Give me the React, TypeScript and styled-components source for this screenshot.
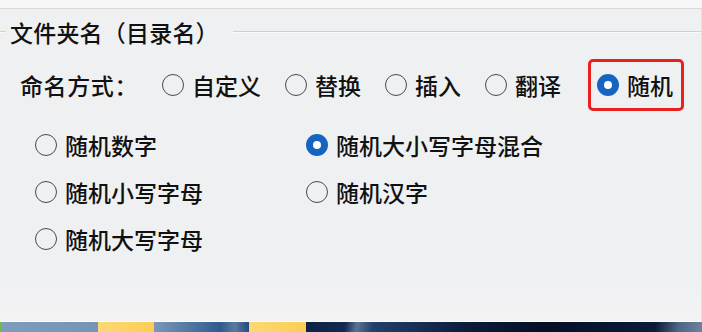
import styled, { createGlobalStyle } from "styled-components";

const GlobalStyle = createGlobalStyle`
  body {
    margin: 0;
    background: #eff0f2;
    font-family: "Noto Sans CJK SC", "Microsoft YaHei", sans-serif;
    font-weight: 500;
    color: #111;
  }
`;

const modes = ["自定义", "替换", "插入", "翻译"];
const options = [
  { label: "随机数字", checked: false },
  { label: "随机大小写字母混合", checked: true },
  { label: "随机小写字母", checked: false },
  { label: "随机汉字", checked: false },
  { label: "随机大写字母", checked: false },
];

const Radio = ({ label, checked }: { label: string; checked?: boolean }) => (
  <RadioItem>
    <Circle $checked={checked} />
    <span>{label}</span>
  </RadioItem>
);

const App = () => {
  return (
    <Page>
      <GlobalStyle />
      <TopBand />
      <Panel>
        <Legend>
          <LegendLine $short />
          <LegendText>文件夹名（目录名）</LegendText>
          <LegendLine />
        </Legend>
        <ModeRow>
          <ModeLabel>命名方式：</ModeLabel>
          {modes.map((m) => (
            <Radio key={m} label={m} />
          ))}
          <Highlight>
            <Radio label="随机" checked />
          </Highlight>
        </ModeRow>
        <OptionGrid>
          {options.map((o) => (
            <Radio key={o.label} label={o.label} checked={o.checked} />
          ))}
        </OptionGrid>
      </Panel>
      <Strip>
        <Seg $w={2} $bg="#6cc04a" />
        <Seg $w={96} $bg="linear-gradient(90deg, #7e9cbd, #7594b7)" />
        <Seg $w={56} $bg="linear-gradient(90deg, #fcd976, #fbcd52)" />
        <Seg $w={95} $bg="linear-gradient(90deg, #7c97b8, #2f5a8f 70%, #5a7aa0 85%, #254a7c)" />
        <Seg $w={57} $bg="linear-gradient(90deg, #fcd976, #fbcd52)" />
        <Seg
          $w={396}
          $bg="linear-gradient(100deg, #0d2244 0%, #112a52 10%, #5a7394 13%, #22406b 17%, #0b1d3c 40%, #040f26 60%, #0a1c3a 88%, #4f6684 94%, #6d829d 100%)"
        />
      </Strip>
    </Page>
  );
};

const Page = styled.div`
  width: 702px;
  height: 332px;
  display: flex;
  flex-direction: column;
  overflow: hidden;
`;

const TopBand = styled.div`
  height: 8px;
  background: #f7f7f8;
  border-bottom: 1px solid #d9d9db;
`;

const Panel = styled.div`
  flex: 1;
  display: flex;
  flex-direction: column;
  padding-top: 8px;
  border-right: 1px solid #e2e2e4;
  border-bottom: 1px solid #fbfbfc;
  background: linear-gradient(180deg, #eff0f2 0%, #eff0f2 85%, #f3f3f4 100%);
`;

const Legend = styled.div`
  display: flex;
  align-items: center;
  height: 30px;
  font-size: 23px;
  line-height: 30px;
`;

const LegendLine = styled.div<{ $short?: boolean }>`
  height: 0;
  border-top: 1px solid #cfd0d3;
  border-bottom: 1px solid #fafafb;
  width: ${(p) => (p.$short ? "6px" : "auto")};
  flex: ${(p) => (p.$short ? "none" : "1")};
  margin-right: ${(p) => (p.$short ? "4px" : "0")};
  margin-left: ${(p) => (p.$short ? "0" : "14px")};
`;

const LegendText = styled.span`
  letter-spacing: 0.2px;
`;

const ModeRow = styled.div`
  display: flex;
  align-items: center;
  margin-top: 12px;
  padding-left: 20px;
  height: 52px;
  font-size: 23px;
  gap: 24px;
`;

const ModeLabel = styled.span`
  margin-right: 0;
  letter-spacing: 0.6px;
`;

const Highlight = styled.div`
  display: flex;
  align-items: center;
  height: 52px;
  box-sizing: border-box;
  border: 3px solid #e8201e;
  border-radius: 5px;
  padding: 0 8px 0 6px;
  margin-left: 3px;
`;

const RadioItem = styled.label`
  display: flex;
  align-items: center;
  gap: 8px;
  font-size: 23px;
  line-height: 30px;
  white-space: nowrap;
`;

const Circle = styled.span<{ $checked?: boolean }>`
  width: 22px;
  height: 22px;
  box-sizing: border-box;
  border-radius: 50%;
  flex: none;
  border: ${(p) => (p.$checked ? "7px solid #1565c0" : "1.6px solid #4a4a4a")};
  background: ${(p) => (p.$checked ? "#fff" : "transparent")};
`;

const OptionGrid = styled.div`
  display: grid;
  grid-template-columns: 271px 1fr;
  grid-auto-rows: 47px;
  align-items: center;
  padding-left: 35px;
  margin-top: 10px;
`;

const Strip = styled.div`
  height: 10px;
  display: flex;
`;

const Seg = styled.div<{ $w: number; $bg: string }>`
  width: ${(p) => p.$w}px;
  flex: none;
  background: ${(p) => p.$bg};
`;

export default App;
